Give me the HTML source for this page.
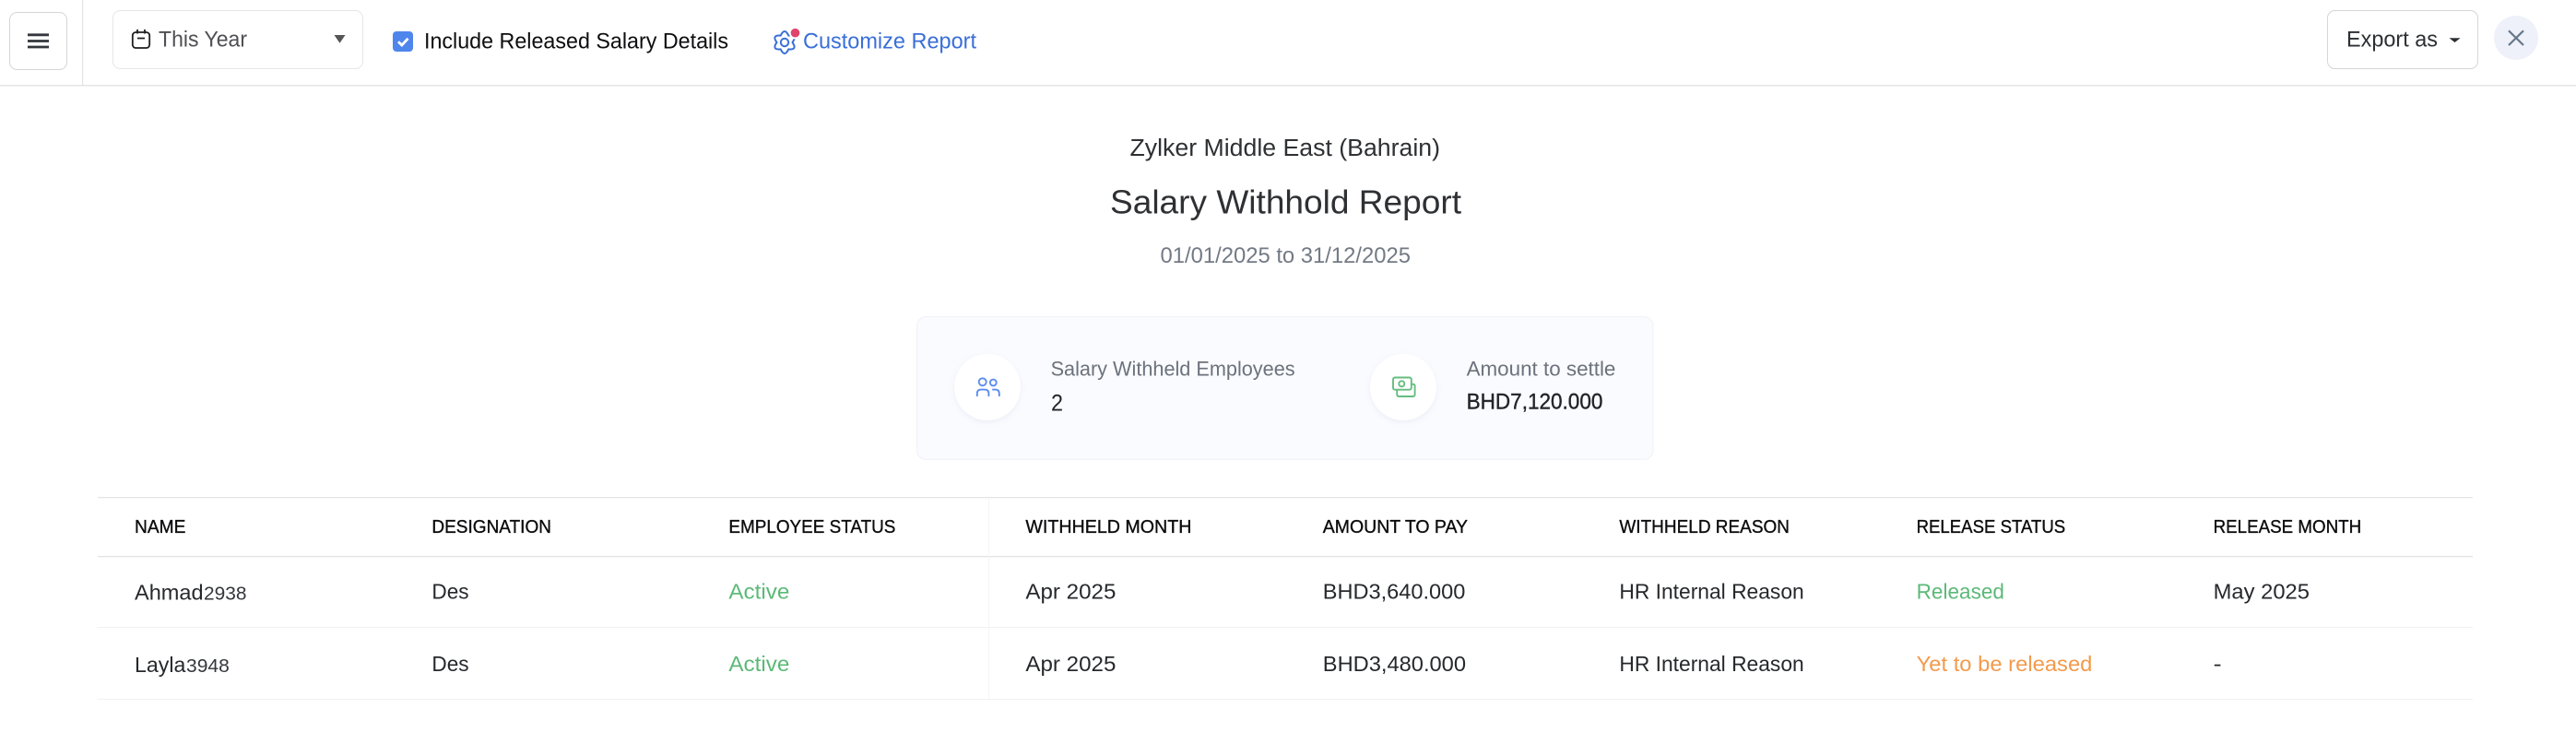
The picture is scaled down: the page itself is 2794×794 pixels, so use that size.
<!DOCTYPE html>
<html lang="en">
<head>
<meta charset="utf-8">
<title>Salary Withhold Report</title>
<style>
html,body{margin:0;padding:0;background:#fff;width:2794px;height:794px;overflow:hidden}
svg{display:block;position:absolute;left:0;top:0}
text{font-family:"Liberation Sans",sans-serif;white-space:pre}
.b{font-size:23px;fill:#26282c}
.h{font-size:20px;fill:#0c0c0e;stroke:#0c0c0e;stroke-width:.35px}
.s{font-size:20px;fill:#33363b}
</style>
</head>
<body>
<svg width="2794" height="794" viewBox="0 0 2794 794" xmlns="http://www.w3.org/2000/svg">
<defs>
<filter id="sh" x="-30%" y="-30%" width="160%" height="160%"><feDropShadow dx="0" dy="2" stdDeviation="3" flood-color="#7f8db5" flood-opacity=".12"/></filter>
</defs>
<rect width="2794" height="794" fill="#fff"/>

<!-- toolbar -->
<rect x="0" y="92" width="2794" height="1.4" fill="#e3e3e3"/>
<rect x="89" y="0" width="1.2" height="92" fill="#e3e3e3"/>
<rect x="10.5" y="13.5" width="62" height="62" rx="8" fill="#fff" stroke="#d6d6d6" stroke-width="1"/>
<path d="M30 37.8H53M30 44.5H53M30 51H53" stroke="#33363b" stroke-width="2.8" fill="none"/>

<rect x="122.5" y="11.5" width="271" height="63" rx="8" fill="#fff" stroke="#e6e6e6" stroke-width="1"/>
<g fill="none" stroke="#1f1f22" stroke-width="1.8">
<rect x="143.8" y="35" width="18.4" height="17" rx="3.5"/>
<path d="M149 32V36.5M157 32V36.5M149 41.5H157"/>
</g>
<text x="172" y="50.5" font-size="24" fill="#4f4f54" textLength="96" lengthAdjust="spacingAndGlyphs">This Year</text>
<path d="M362.5 38H374.5L368.5 46.8Z" fill="#555"/>

<rect x="426" y="34" width="22" height="22" rx="4" fill="#4f86ec"/>
<path d="M432 45.2L435.8 49L442.5 41.8" fill="none" stroke="#fff" stroke-width="2.8"/>
<text x="460" y="52.3" font-size="24" fill="#0e0e10" textLength="330" lengthAdjust="spacingAndGlyphs">Include Released Salary Details</text>

<g fill="none" stroke="#3a6fd8" stroke-width="2" stroke-linejoin="round">
<path d="M859.5 46Q865.3 37.75 855.25 38.6Q851 29.5 846.75 38.6Q836.7 37.75 842.5 46Q836.7 54.25 846.75 53.4Q851 62.5 855.25 53.4Q865.3 54.25 859.5 46Z"/>
<circle cx="851" cy="46" r="4.2"/>
</g>
<circle cx="862.5" cy="35.7" r="6.6" fill="#fff"/>
<circle cx="862.5" cy="35.7" r="4.8" fill="#e0446a"/>
<text x="871" y="52.3" font-size="24" fill="#3a6fd8" textLength="188" lengthAdjust="spacingAndGlyphs">Customize Report</text>

<rect x="2524.5" y="11.5" width="163" height="63" rx="8" fill="#fff" stroke="#d6d6d6" stroke-width="1"/>
<text x="2545" y="50.7" font-size="24" fill="#2c2f33" textLength="99" lengthAdjust="spacingAndGlyphs">Export as</text>
<path d="M2656.5 41.3H2668.5L2662.5 46Z" fill="#2c2f33"/>
<circle cx="2729" cy="41" r="24" fill="#eef1f9"/>
<path d="M2721 33.3L2737 49M2737 33.3L2721 49" stroke="#68778a" stroke-width="2.2" fill="none"/>

<!-- titles -->
<text x="1225.5" y="168.8" font-size="25.5" fill="#2e3033" textLength="336.5" lengthAdjust="spacingAndGlyphs">Zylker Middle East (Bahrain)</text>
<text x="1204" y="231.4" font-size="36" fill="#2e3033" textLength="381" lengthAdjust="spacingAndGlyphs">Salary Withhold Report</text>
<text x="1258.5" y="285" font-size="24" fill="#727a85" textLength="271.5" lengthAdjust="spacingAndGlyphs">01/01/2025 to 31/12/2025</text>

<!-- summary card -->
<rect x="994.5" y="343.5" width="798.5" height="155" rx="10" fill="#fafbff" stroke="#f1f3f8" stroke-width="1.2"/>
<circle cx="1071" cy="420" r="36" fill="#fff" filter="url(#sh)"/>
<circle cx="1522" cy="420" r="36" fill="#fff" filter="url(#sh)"/>
<g fill="none" stroke="#5b8def" stroke-width="1.9">
<circle cx="1065.7" cy="414.3" r="4"/>
<circle cx="1077.3" cy="415" r="3.4"/>
<path d="M1059.8 430V427Q1059.8 422.6 1064 422.6H1068Q1072.4 422.6 1072.4 427V430"/>
<path d="M1076.2 422.6H1079.5Q1083.8 422.6 1083.8 427V430"/>
</g>
<g fill="none" stroke="#66bd7f" stroke-width="1.9">
<rect x="1511" y="409.5" width="19.8" height="13.2" rx="2"/>
<circle cx="1520.3" cy="416.3" r="3"/>
<path d="M1515.2 422.7V427.8Q1515.2 430 1517.4 430H1532.4Q1534.6 430 1534.6 427.8V418.9Q1534.6 416.7 1532.4 416.7H1530.8"/>
</g>
<text x="1139.6" y="407.7" font-size="22.5" fill="#6c727c" textLength="265" lengthAdjust="spacingAndGlyphs">Salary Withheld Employees</text>
<text x="1140" y="445.7" font-size="25" fill="#222428" textLength="13" lengthAdjust="spacingAndGlyphs">2</text>
<text x="1590.6" y="407.7" font-size="22.5" fill="#6c727c" textLength="161.8" lengthAdjust="spacingAndGlyphs">Amount to settle</text>
<text x="1590.6" y="443.3" font-size="24" fill="#222428" stroke="#222428" stroke-width=".4" textLength="147.8" lengthAdjust="spacingAndGlyphs">BHD7,120.000</text>

<!-- table -->
<rect x="106" y="539" width="2576" height="1.3" fill="#e4e4e4"/>
<rect x="106" y="603" width="2576" height="1.3" fill="#e2e2e2"/>
<rect x="106" y="680" width="2576" height="1" fill="#f0f0f0"/>
<rect x="106" y="758" width="2576" height="1" fill="#f0f0f0"/>
<rect x="1072" y="540" width="1" height="218" fill="#f6f6f6"/>

<text class="h" x="146" y="578" textLength="55.4" lengthAdjust="spacingAndGlyphs">NAME</text>
<text class="h" x="468.4" y="578" textLength="129.6" lengthAdjust="spacingAndGlyphs">DESIGNATION</text>
<text class="h" x="790.4" y="578" textLength="181" lengthAdjust="spacingAndGlyphs">EMPLOYEE STATUS</text>
<text class="h" x="1112.4" y="578" textLength="180" lengthAdjust="spacingAndGlyphs">WITHHELD MONTH</text>
<text class="h" x="1434.8" y="578" textLength="157.2" lengthAdjust="spacingAndGlyphs">AMOUNT TO PAY</text>
<text class="h" x="1756.4" y="578" textLength="184.6" lengthAdjust="spacingAndGlyphs">WITHHELD REASON</text>
<text class="h" x="2078.6" y="578" textLength="161.6" lengthAdjust="spacingAndGlyphs">RELEASE STATUS</text>
<text class="h" x="2400.6" y="578" textLength="160.6" lengthAdjust="spacingAndGlyphs">RELEASE MONTH</text>

<text class="b" x="146" y="650.6" textLength="74.6" lengthAdjust="spacingAndGlyphs">Ahmad</text>
<text class="s" x="221" y="650.6" textLength="46.5" lengthAdjust="spacingAndGlyphs">2938</text>
<text class="b" x="468.4" y="649.6" textLength="40.2" lengthAdjust="spacingAndGlyphs">Des</text>
<text class="b" x="790.4" y="649.6" style="fill:#5cb978" textLength="66" lengthAdjust="spacingAndGlyphs">Active</text>
<text class="b" x="1112.4" y="649.6" textLength="98" lengthAdjust="spacingAndGlyphs">Apr 2025</text>
<text class="b" x="1434.8" y="649.6" textLength="154.5" lengthAdjust="spacingAndGlyphs">BHD3,640.000</text>
<text class="b" x="1756.4" y="649.6" textLength="200.3" lengthAdjust="spacingAndGlyphs">HR Internal Reason</text>
<text class="b" x="2078.6" y="649.6" style="fill:#5cb978" textLength="95.4" lengthAdjust="spacingAndGlyphs">Released</text>
<text class="b" x="2400.6" y="649.6" textLength="104.4" lengthAdjust="spacingAndGlyphs">May 2025</text>

<text class="b" x="146" y="729" textLength="55.4" lengthAdjust="spacingAndGlyphs">Layla</text>
<text class="s" x="202" y="729" textLength="46.8" lengthAdjust="spacingAndGlyphs">3948</text>
<text class="b" x="468.4" y="727.8" textLength="40.2" lengthAdjust="spacingAndGlyphs">Des</text>
<text class="b" x="790.4" y="727.8" style="fill:#5cb978" textLength="66" lengthAdjust="spacingAndGlyphs">Active</text>
<text class="b" x="1112.4" y="727.8" textLength="98" lengthAdjust="spacingAndGlyphs">Apr 2025</text>
<text class="b" x="1434.8" y="727.8" textLength="155.2" lengthAdjust="spacingAndGlyphs">BHD3,480.000</text>
<text class="b" x="1756.4" y="727.8" textLength="200.3" lengthAdjust="spacingAndGlyphs">HR Internal Reason</text>
<text class="b" x="2078.6" y="727.8" style="fill:#f39a4b" textLength="190.8" lengthAdjust="spacingAndGlyphs">Yet to be released</text>
<text class="b" x="2400.6" y="727.8" textLength="9" lengthAdjust="spacingAndGlyphs">-</text>
</svg>
</body>
</html>
